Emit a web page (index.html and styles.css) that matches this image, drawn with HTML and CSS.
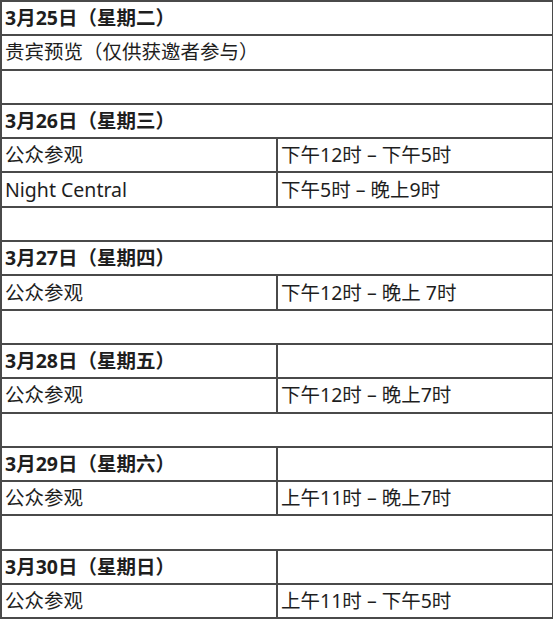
FILE: index.html
```html
<!DOCTYPE html>
<html lang="zh-CN">
<head>
<meta charset="utf-8">
<link rel="stylesheet" href="styles.css">
</head>
<body>
<table class="schedule">
  <colgroup><col class="c1"><col class="c2"></colgroup>
  <tr><td class="day" colspan="2">3月25日（星期二）</td></tr>
  <tr><td colspan="2">贵宾预览（仅供获邀者参与）</td></tr>
  <tr><td colspan="2"></td></tr>
  <tr><td class="day" colspan="2">3月26日（星期三）</td></tr>
  <tr><td>公众参观</td><td class="time">下午12时 – 下午5时</td></tr>
  <tr><td>Night Central</td><td class="time">下午5时 – 晚上9时</td></tr>
  <tr><td colspan="2"></td></tr>
  <tr><td class="day" colspan="2">3月27日（星期四）</td></tr>
  <tr><td>公众参观</td><td class="time">下午12时 – 晚上 7时</td></tr>
  <tr><td colspan="2"></td></tr>
  <tr><td class="day">3月28日（星期五）</td><td></td></tr>
  <tr><td>公众参观</td><td class="time">下午12时 – 晚上7时</td></tr>
  <tr><td colspan="2"></td></tr>
  <tr><td class="day">3月29日（星期六）</td><td></td></tr>
  <tr><td>公众参观</td><td class="time">上午11时 – 晚上7时</td></tr>
  <tr><td colspan="2"></td></tr>
  <tr><td class="day">3月30日（星期日）</td><td></td></tr>
  <tr><td>公众参观</td><td class="time">上午11时 – 下午5时</td></tr>
</table>
</body>
</html>
```
FILE: styles.css
```css
html, body {
  margin: 0;
  padding: 0;
  background: #fff;
}
.schedule {
  border-collapse: collapse;
  width: 552px;
  table-layout: fixed;
  font-family: "Noto Sans", "Noto Sans CJK SC", sans-serif;
  font-size: 19.5px;
  color: #1e1e1e;
}
.c1 { width: 276px; }
.c2 { width: 276px; }
.schedule tr {
  height: 34.3px;
}
.schedule td {
  border: 2px solid #4a4a4a;
  padding: 0 0 0 3px;
  line-height: 24px;
  vertical-align: middle;
  white-space: nowrap;
  overflow: hidden;
}
.schedule td.day {
  font-weight: bold;
}
```
